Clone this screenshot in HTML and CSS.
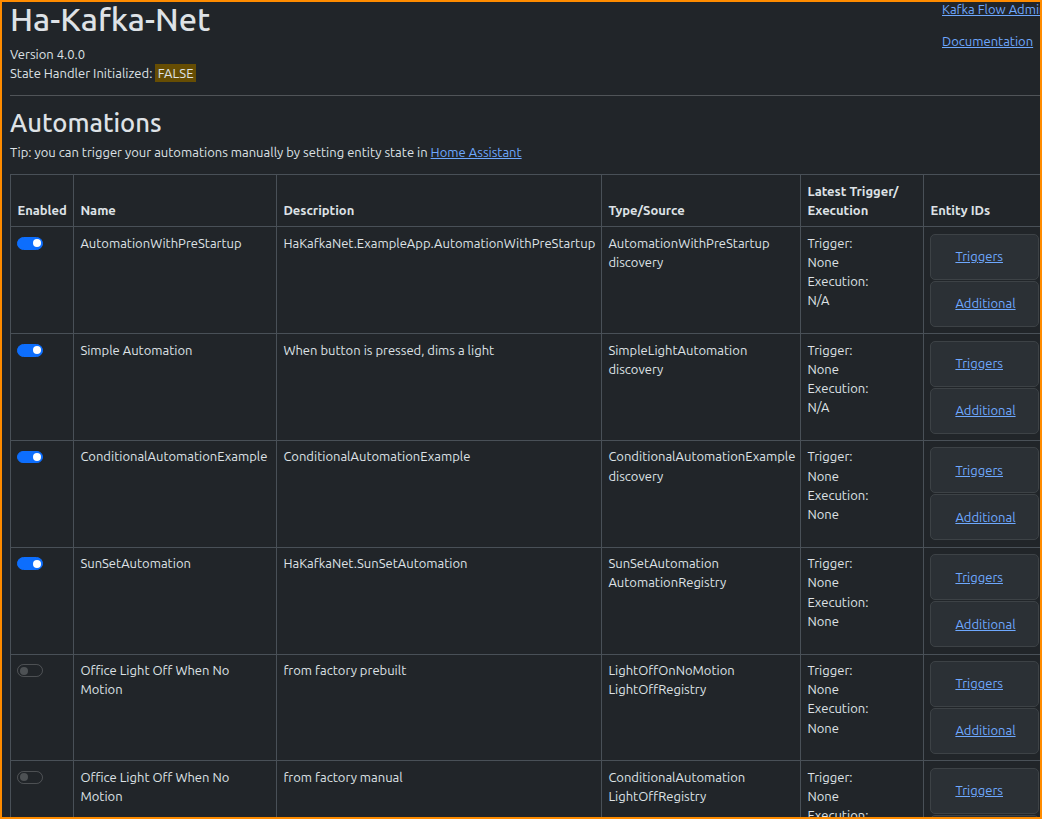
FILE: index.html
```html
<!DOCTYPE html>
<html lang="en">
<head>
<meta charset="utf-8">
<title>Ha-Kafka-Net</title>
<link rel="stylesheet" href="styles.css">
</head>
<body>
<div class="frame"></div>
<div class="page">
  <header class="top">
    <div class="brand">
      <h1 class="title">Ha-Kafka-Net</h1>
      <div class="meta">Version 4.0.0</div>
      <div class="meta">State Handler Initialized: <mark class="flag">FALSE</mark></div>
    </div>
    <nav class="links">
      <p class="link-line"><a href="#">Kafka Flow Admin</a></p>
      <p class="link-line"><a href="#">Documentation</a></p>
    </nav>
  </header>
  <hr class="rule">
  <h2 class="section-title">Automations</h2>
  <p class="tip">Tip: you can trigger your automations manually by setting entity state in <a href="#">Home Assistant</a></p>
  <table class="grid">
    <colgroup>
      <col class="c-en"><col class="c-name"><col class="c-desc"><col class="c-type"><col class="c-latest"><col class="c-ids">
    </colgroup>
    <thead>
      <tr>
        <th>Enabled</th><th>Name</th><th>Description</th><th>Type/Source</th><th>Latest Trigger/ Execution</th><th>Entity IDs</th>
      </tr>
    </thead>
    <tbody>
      <tr>
        <td><span class="switch on"></span></td>
        <td>AutomationWithPreStartup</td>
        <td>HaKafkaNet.ExampleApp.AutomationWithPreStartup</td>
        <td>AutomationWithPreStartup<br>discovery</td>
        <td>Trigger:<br>None<br>Execution:<br>N/A</td>
        <td><div class="ids"><div class="idbtn"><a href="#">Triggers</a></div><div class="idbtn"><a href="#">Additional</a></div></div></td>
      </tr>
      <tr>
        <td><span class="switch on"></span></td>
        <td>Simple Automation</td>
        <td>When button is pressed, dims a light</td>
        <td>SimpleLightAutomation<br>discovery</td>
        <td>Trigger:<br>None<br>Execution:<br>N/A</td>
        <td><div class="ids"><div class="idbtn"><a href="#">Triggers</a></div><div class="idbtn"><a href="#">Additional</a></div></div></td>
      </tr>
      <tr>
        <td><span class="switch on"></span></td>
        <td>ConditionalAutomationExample</td>
        <td>ConditionalAutomationExample</td>
        <td>ConditionalAutomationExample<br>discovery</td>
        <td>Trigger:<br>None<br>Execution:<br>None</td>
        <td><div class="ids"><div class="idbtn"><a href="#">Triggers</a></div><div class="idbtn"><a href="#">Additional</a></div></div></td>
      </tr>
      <tr>
        <td><span class="switch on"></span></td>
        <td>SunSetAutomation</td>
        <td>HaKafkaNet.SunSetAutomation</td>
        <td>SunSetAutomation<br>AutomationRegistry</td>
        <td>Trigger:<br>None<br>Execution:<br>None</td>
        <td><div class="ids"><div class="idbtn"><a href="#">Triggers</a></div><div class="idbtn"><a href="#">Additional</a></div></div></td>
      </tr>
      <tr>
        <td><span class="switch"></span></td>
        <td>Office Light Off When No Motion</td>
        <td>from factory prebuilt</td>
        <td>LightOffOnNoMotion<br>LightOffRegistry</td>
        <td>Trigger:<br>None<br>Execution:<br>None</td>
        <td><div class="ids"><div class="idbtn"><a href="#">Triggers</a></div><div class="idbtn"><a href="#">Additional</a></div></div></td>
      </tr>
      <tr>
        <td><span class="switch"></span></td>
        <td>Office Light Off When No Motion</td>
        <td>from factory manual</td>
        <td>ConditionalAutomation<br>LightOffRegistry</td>
        <td>Trigger:<br>None<br>Execution:<br>None</td>
        <td><div class="ids"><div class="idbtn"><a href="#">Triggers</a></div><div class="idbtn"><a href="#">Additional</a></div></div></td>
      </tr>
    </tbody>
  </table>
</div>
</body>
</html>
```

FILE: styles.css
```css
html, body {
  margin: 0;
  padding: 0;
  background: #212529;
  overflow: hidden;
}
body {
  color: #dee2e6;
  font-family: "Ubuntu", "Open Sans", "Noto Sans", sans-serif;
  font-size: 13px;
  line-height: 19.2px;
}
a {
  color: #6ea8fe;
  text-decoration: underline;
}
.frame {
  position: fixed;
  inset: 0;
  border: 2px solid #ff8c00;
  pointer-events: none;
  z-index: 10;
}
.page {
  width: 1035px;
  padding: 0 10px;
}
.top {
  display: flex;
  justify-content: space-between;
}
.brand {
  flex: 1;
}
.title {
  margin: 0 0 6.4px;
  font-size: 32.6px;
  line-height: 38.4px;
  font-weight: 500;
}
.flag {
  background: #664d03;
  color: #dee2e6;
  padding: 2.4px;
}
.links {
  width: 103px;
  white-space: nowrap;
}
.link-line {
  margin: 0 0 12.8px;
}
.rule {
  margin: 12px 0 12px;
  border: 0;
  border-top: 1px solid rgba(222, 226, 230, 0.25);
}
.section-title {
  margin: 0 0 4.4px;
  font-size: 25.6px;
  line-height: 30.7px;
  font-weight: 500;
}
.tip {
  margin: 0 0 11.8px;
}
.grid {
  width: 1035px;
  table-layout: fixed;
  border-collapse: collapse;
}
.c-en { width: 63px; }
.c-name { width: 203px; }
.c-desc { width: 325px; }
.c-type { width: 199px; }
.c-latest { width: 123px; }
.c-ids { width: 122px; }
.grid th, .grid td {
  border: 1px solid #495057;
  padding: 6.4px;
  text-align: left;
}
.grid th {
  vertical-align: bottom;
  font-weight: 700;
}
.grid td {
  vertical-align: top;
}
.switch {
  display: block;
  position: relative;
  width: 25.6px;
  height: 12.8px;
  margin-top: 3.2px;
  box-sizing: border-box;
  border-radius: 7px;
  border: 1px solid rgba(255, 255, 255, 0.2);
  background: transparent;
}
.switch::after {
  content: "";
  position: absolute;
  top: 1.4px;
  left: 1.4px;
  width: 8px;
  height: 8px;
  border-radius: 50%;
  background: #4d5154;
}
.switch.on {
  background: #0d6efd;
  border-color: #0d6efd;
}
.switch.on::after {
  left: auto;
  right: 1.4px;
  background: #fff;
}
.ids {
  display: flex;
  flex-direction: column;
  gap: 1px;
}
.idbtn {
  height: 46px;
  box-sizing: border-box;
  display: flex;
  align-items: center;
  padding-left: 24px;
  background: #2b3035;
  border: 1px solid #3d4246;
  border-radius: 5px;
}
```
